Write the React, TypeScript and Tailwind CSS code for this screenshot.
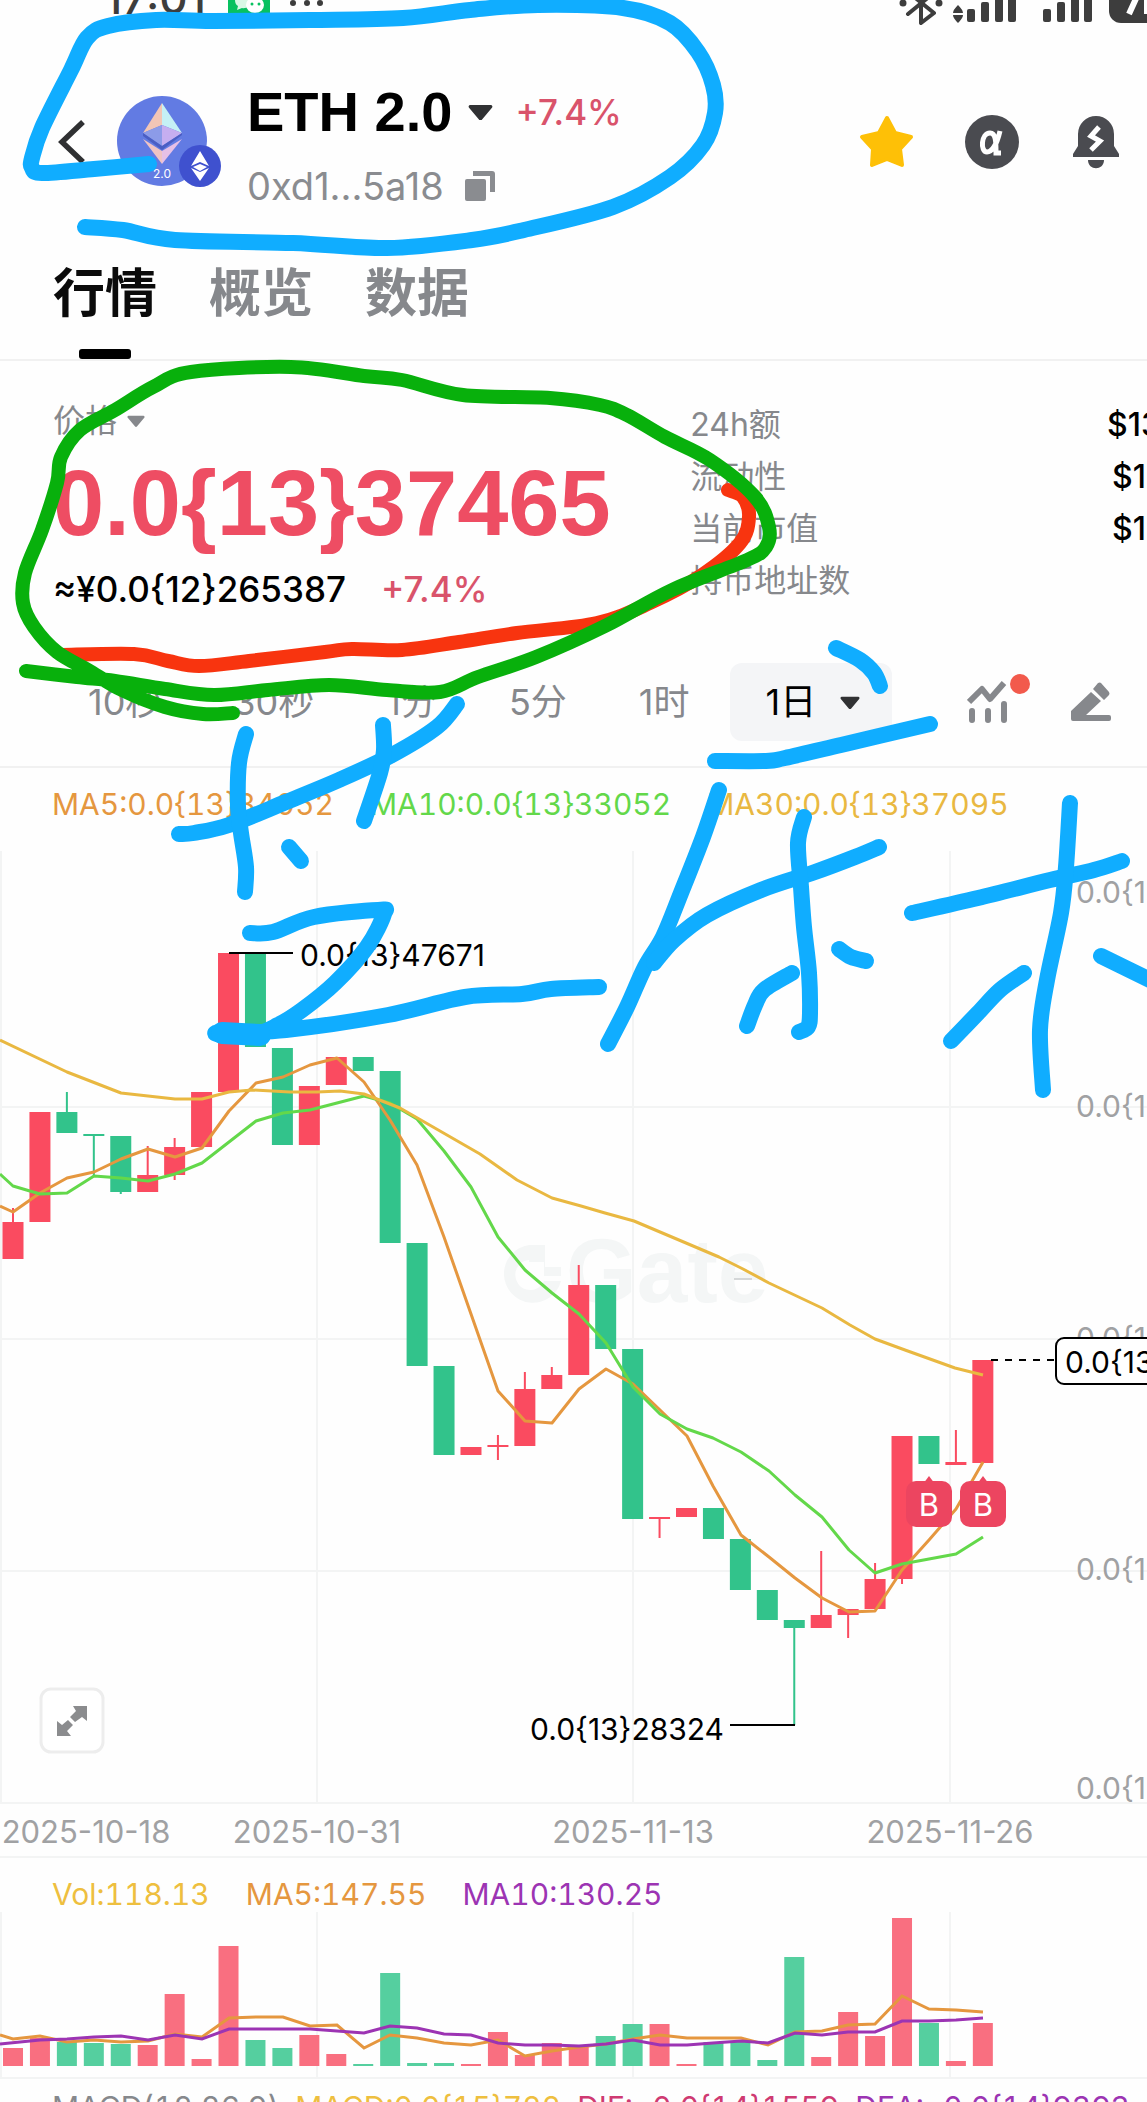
import { useState } from "react";

type Point = [number, number];
type Candle = {
  up: boolean;
  top: number;
  bottom: number;
  high?: number;
  low?: number;
  vol: number;
};

const RED = "#fa4b60";
const GREEN = "#32c38b";
const ORANGE = "#e5973f";
const LIME = "#63d84a";
const YELLOW = "#e9b841";
const PURPLE = "#9c34b3";

const STEP = 26.94;
const GRID_X = [1, 317, 633, 950];

const candles: Candle[] = [
  { up: true, top: 1222, bottom: 1259, high: 1208, vol: 2048 },
  { up: true, top: 1112, bottom: 1222, vol: 2038 },
  { up: false, top: 1112, bottom: 1133, high: 1092, vol: 2042 },
  { up: false, top: 1134, bottom: 1136, low: 1176, vol: 2043 },
  { up: false, top: 1136, bottom: 1192, low: 1194, vol: 2044 },
  { up: true, top: 1175, bottom: 1192, high: 1146, vol: 2045 },
  { up: true, top: 1147, bottom: 1175, high: 1138, low: 1180, vol: 1994 },
  { up: true, top: 1092, bottom: 1147, vol: 2059 },
  { up: true, top: 953, bottom: 1092, vol: 1946 },
  { up: false, top: 953, bottom: 1047, vol: 2040 },
  { up: false, top: 1048, bottom: 1145, vol: 2048 },
  { up: true, top: 1086, bottom: 1145, vol: 2035 },
  { up: true, top: 1057, bottom: 1085, vol: 2054 },
  { up: false, top: 1057, bottom: 1071, vol: 2064 },
  { up: false, top: 1071, bottom: 1243, vol: 1973 },
  { up: false, top: 1243, bottom: 1366, vol: 2063 },
  { up: false, top: 1366, bottom: 1455, vol: 2063 },
  { up: true, top: 1447, bottom: 1455, vol: 2064 },
  { up: true, top: 1445, bottom: 1447, high: 1435, low: 1460, vol: 2032 },
  { up: true, top: 1389, bottom: 1446, high: 1372, vol: 2055 },
  { up: true, top: 1375, bottom: 1389, high: 1367, vol: 2043 },
  { up: true, top: 1285, bottom: 1375, high: 1265, vol: 2046 },
  { up: false, top: 1285, bottom: 1349, vol: 2036 },
  { up: false, top: 1349, bottom: 1519, vol: 2024 },
  { up: true, top: 1517, bottom: 1519, low: 1538, vol: 2024 },
  { up: true, top: 1508, bottom: 1517, vol: 2064 },
  { up: false, top: 1508, bottom: 1539, vol: 2042 },
  { up: false, top: 1539, bottom: 1590, vol: 2042 },
  { up: false, top: 1590, bottom: 1620, vol: 2060 },
  { up: false, top: 1620, bottom: 1628, low: 1725, vol: 1957 },
  { up: true, top: 1615, bottom: 1628, high: 1551, vol: 2057 },
  { up: true, top: 1609, bottom: 1615, low: 1638, vol: 2012 },
  { up: true, top: 1579, bottom: 1609, high: 1563, vol: 2036 },
  { up: true, top: 1436, bottom: 1579, low: 1584, vol: 1918 },
  { up: false, top: 1436, bottom: 1464, vol: 2023 },
  { up: true, top: 1462, bottom: 1465, high: 1430, vol: 2061 },
  { up: true, top: 1360, bottom: 1463, vol: 2023 },
];

const ma5 =
  "0,1206 13,1212 40,1193 67,1178 94,1172 121,1159 148,1149 175,1157 202,1148 229,1111 256,1083 283,1077 310,1065 337,1058 364,1082 390,1120 417,1165 444,1237 471,1314 498,1391 525,1421 552,1423 579,1389 606,1369 633,1384 660,1410 687,1436 713,1486 741,1535 769,1557 795,1578 822,1598 849,1612 875,1611 902,1570 929,1540 956,1509 983,1462";
const ma10 =
  "0,1174 13,1186 40,1194 67,1193 94,1176 121,1178 148,1181 175,1174 202,1163 229,1142 256,1121 283,1113 310,1110 337,1103 364,1096 390,1103 417,1119 444,1151 471,1187 498,1237 525,1270 552,1293 579,1314 606,1343 633,1387 660,1414 687,1429 713,1438 741,1452 769,1471 795,1495 822,1517 849,1550 875,1573 902,1564 929,1559 956,1554 983,1537";
const ma30 =
  "0,1040 67,1072 121,1093 175,1099 202,1099 229,1092 252,1090 290,1092 317,1092 340,1091 364,1094 400,1108 440,1131 480,1154 517,1180 552,1198 581,1206 605,1213 634,1221 686,1243 719,1257 743,1269 769,1283 822,1308 850,1325 875,1339 905,1350 955,1368 983,1375";
const volMa5 =
  "0,2035 13,2039 40,2036 67,2042 94,2040 121,2042 148,2041 175,2034 202,2037 229,2018 256,2017 283,2017 310,2026 337,2025 364,2048 390,2035 417,2038 444,2043 471,2045 498,2040 525,2056 552,2051 579,2047 606,2044 633,2039 660,2035 687,2038 713,2038 741,2038 768,2045 795,2032 822,2031 848,2025 875,2024 902,1996 929,2009 956,2010 983,2012";
const volMa10 =
  "0,2044 40,2040 67,2039 94,2037 121,2036 148,2040 175,2035 202,2039 229,2029 310,2029 337,2031 364,2033 390,2026 417,2028 444,2034 471,2035 498,2043 525,2045 552,2045 579,2046 606,2044 633,2040 660,2045 687,2045 713,2043 741,2041 768,2043 795,2033 822,2035 848,2032 875,2032 902,2021 929,2021 956,2020 983,2018";

const priceAxis = [892, 1106, 1338, 1569, 1788];
const dateAxis = [
  { x: 86, label: "2025-10-18" },
  { x: 317, label: "2025-10-31" },
  { x: 633, label: "2025-11-13" },
  { x: 950, label: "2025-11-26" },
];

const redInk: Point[] = [
  [62, 655], [134, 654], [168, 661], [199, 666], [249, 661], [325, 652], [352, 649], [402, 650],
  [459, 642], [517, 633], [597, 623], [650, 603], [702, 575], [740, 543], [749, 517], [743, 497], [728, 490],
];
const greenInk: Point[] = [
  [26, 671], [77, 677], [115, 681], [165, 689], [214, 695], [268, 690], [329, 685], [387, 690],
  [440, 692], [478, 677], [536, 657], [605, 626], [672, 590], [747, 560], [766, 547], [769, 527],
  [755, 497], [710, 460], [665, 437], [627, 415], [600, 405], [550, 398], [463, 395], [402, 380],
  [364, 376], [291, 367], [191, 372], [153, 387], [115, 410], [80, 430], [61, 457], [57, 483],
  [42, 530], [25, 573], [23, 603], [34, 627], [57, 652], [88, 670], [122, 690], [165, 707],
  [203, 714], [233, 713],
];
const blueInk: Point[][] = [
  [
    [149, 164], [94, 169], [42, 173], [32, 168], [32, 158], [42, 128], [71, 70], [87, 38],
    [108, 26], [156, 20], [212, 21], [310, 20], [403, 18], [470, 10], [538, 5], [623, 8], [670, 23],
    [698, 52], [713, 85], [715, 113], [703, 145], [670, 177], [613, 207], [524, 230], [472, 240],
    [387, 248], [293, 243], [175, 240], [123, 230], [85, 227],
  ],
  [[179, 834], [194, 833], [229, 825], [286, 802], [339, 780], [392, 755], [437, 727], [457, 704]],
  [[383, 725], [384, 750], [380, 773], [364, 821]],
  [[246, 734], [239, 763], [238, 807], [241, 833], [246, 867], [245, 892]],
  [[289, 847], [301, 861]],
  [
    [250, 933], [273, 932], [314, 917], [378, 910], [384, 914], [367, 947], [335, 983],
    [302, 1010], [278, 1025], [250, 1036], [216, 1033], [286, 1030], [388, 1015], [465, 997],
    [522, 994], [551, 989], [599, 987],
  ],
  [[836, 648], [860, 660], [874, 673], [880, 686]],
  [[715, 761], [766, 761], [785, 758], [841, 745], [930, 724]],
  [[719, 790], [703, 837], [681, 893], [663, 937], [645, 967], [627, 1007], [608, 1044]],
  [[654, 963], [674, 940], [707, 915], [761, 890], [815, 872], [855, 857], [879, 847]],
  [[804, 817], [798, 843], [801, 887], [804, 927], [809, 973], [810, 1013], [808, 1027], [799, 1032]],
  [[792, 973], [764, 990], [755, 1005], [747, 1026]],
  [[839, 949], [851, 957], [866, 961]],
  [[912, 913], [978, 898], [1050, 880], [1094, 870], [1122, 861]],
  [[1070, 803], [1066, 867], [1061, 913], [1047, 980], [1040, 1030], [1043, 1090]],
  [[1024, 973], [1000, 990], [978, 1013], [951, 1041]],
  [[1101, 956], [1150, 980]],
];

// Catmull-Rom through every point, written as cubic segments
function smooth(points: Point[]) {
  let d = `M${points[0][0]} ${points[0][1]}`;
  for (let i = 0; i < points.length - 1; i++) {
    const p0 = points[i - 1] ?? points[i];
    const p1 = points[i];
    const p2 = points[i + 1];
    const p3 = points[i + 2] ?? p2;
    const c1 = [p1[0] + (p2[0] - p0[0]) / 6, p1[1] + (p2[1] - p0[1]) / 6];
    const c2 = [p2[0] - (p3[0] - p1[0]) / 6, p2[1] - (p3[1] - p1[1]) / 6];
    d += ` C${c1.join(" ")} ${c2.join(" ")} ${p2.join(" ")}`;
  }
  return d;
}

function Caret({ className }: { className: string }) {
  return (
    <svg viewBox="0 0 24 16" className={className} aria-hidden="true">
      <path d="M2 1h20a1.500 1.500 0 0 1 1 2.500L13.500 15a2 2 0 0 1-3 0L1 3.500A1.500 1.500 0 0 1 2 1z" fill="currentColor" />
    </svg>
  );
}

function StatusBar() {
  return (
    <div className="flex h-[26px] items-start justify-between overflow-hidden pl-[104px] text-[#3d3d3d]">
      <div className="flex items-start">
        <span className="-mt-[26px] w-[124px] text-[44px] leading-[48px] font-medium">17:01</span>
        <svg width="42" height="14" viewBox="0 0 42 14">
          <rect width="42" height="14" fill="#08c160" />
          <path d="M7 0h16c0 6-5 9-9 8l-5 2 1-4c-2-1-3-3-3-6z" fill="#d9f8e6" />
          <ellipse cx="27" cy="5" rx="9" ry="8" fill="#fff" />
          <circle cx="24" cy="4" r="1.500" fill="#08c160" />
          <circle cx="31" cy="4" r="1.500" fill="#08c160" />
        </svg>
        <svg width="60" height="12" viewBox="0 0 60 12" fill="currentColor">
          <circle cx="23" cy="3" r="3" />
          <circle cx="37" cy="3" r="3" />
          <circle cx="50" cy="3" r="3" />
        </svg>
      </div>
      <svg width="248" height="26" viewBox="0 0 248 26" fill="currentColor">
        <g fill="none" stroke="currentColor" strokeWidth="4" strokeLinecap="round" strokeLinejoin="round">
          <path d="M9 14 31-4M14-4l21 17-13 10V-4" />
        </g>
        <circle cx="4" cy="3" r="3.500" />
        <circle cx="40" cy="3" r="3.500" />
        <path d="M54 13q0-3 5-8 5 5 5 8zM54 15h10q0 3-5 8-5-5-5-8z" />
        <rect x="68" y="9" width="8" height="13" rx="2" />
        <rect x="82" y="2" width="8" height="20" rx="2" />
        <rect x="96" y="-6" width="8" height="28" rx="2" />
        <rect x="109" y="-6" width="8" height="28" rx="2" />
        <rect x="144" y="9" width="8" height="13" rx="2" />
        <rect x="158" y="2" width="8" height="20" rx="2" />
        <rect x="172" y="-6" width="8" height="28" rx="2" />
        <rect x="185" y="-6" width="8" height="28" rx="2" />
        <rect x="210" y="-30" width="80" height="53" rx="12" />
        <path d="M230 14 240-8M248-4v18" stroke="#fff" strokeWidth="6" />
      </svg>
    </div>
  );
}

function TokenLogo() {
  return (
    <svg width="104" height="92" viewBox="0 0 104 92" className="ml-[31px] shrink-0" role="img" aria-label="ETH 2.0">
      <circle cx="45" cy="45" r="45" fill="#627be3" />
      <path d="M45 7 26 37l19-8z" fill="#f2c6b6" />
      <path d="M45 7 65 37 45 29z" fill="#c5f0f5" />
      <path d="M45 29 26 37l19 13z" fill="#8c9be8" />
      <path d="M45 29 65 37 45 50z" fill="#c5aef0" />
      <path d="m26 43 19 12v13z" fill="#efc3c3" />
      <path d="M65 43 45 55v13z" fill="#e6c0e6" />
      <path d="m26 37 19 13 20-13v2L45 54 26 40z" fill="#4a5ec4" />
      <text x="45" y="82" textAnchor="middle" fontSize="12" fill="#fff">2.0</text>
      <circle cx="83" cy="70" r="21" fill="#3f51cf" />
      <path d="m83 55 9 15-9-4-9 4z" fill="#fff" />
      <path d="m83 85 9-13-9 4-9-4z" fill="#fff" />
      <path d="m76 71 7-3 7 3-7 4z" fill="#fff" />
    </svg>
  );
}

function Header() {
  return (
    <header className="flex items-center pt-[54px] pr-[24px] pl-[58px]">
      <button type="button" aria-label="返回" className="shrink-0">
        <svg width="28" height="44" viewBox="0 0 28 44" fill="none">
          <path d="M25 2 4 22l21 20" stroke="#2f3032" strokeWidth="5.500" />
        </svg>
      </button>
      <TokenLogo />
      <div className="ml-[26px] flex-1">
        <div className="flex h-16 items-center">
          <h1 className="font-['Liberation_Sans',sans-serif] text-[56px] leading-[64px] font-bold whitespace-nowrap text-black">
            ETH 2.0
          </h1>
          <Caret className="ml-[16px] w-[25px] text-[#303133]" />
          <span className="ml-[22px] text-[35px] leading-[40px] font-medium text-[#d9536b]">+7.4%</span>
        </div>
        <div className="mt-6 flex h-9 items-center text-[#8a8c90]">
          <span className="text-[38px] leading-[36px]">0xd1...5a18</span>
          <button type="button" aria-label="复制地址" className="ml-[20px]">
            <svg width="32" height="32" viewBox="0 0 32 32" fill="currentColor">
              <rect x="1" y="9" width="21" height="22" rx="2" />
              <path d="M9 1h19a3 3 0 0 1 3 3v18h-5V6H9z" />
            </svg>
          </button>
        </div>
      </div>
      <div className="flex items-center gap-[50px]">
        <button type="button" aria-label="收藏">
          <svg width="56" height="56" viewBox="0 0 56 56">
            <path
              d="M28 4 36 19 52 23 41 35 43 51 28 45 13 51 14 35 3 23 20 19z"
              fill="#fec007" stroke="#fec007" strokeWidth="4" strokeLinejoin="round"
            />
          </svg>
        </button>
        <button type="button" aria-label="Alpha">
          <svg width="54" height="54" viewBox="0 0 54 54">
            <circle cx="27" cy="27" r="27" fill="#4a4b50" />
            <path
              d="M35 16c-3 13-8 21-13 21-7 0-6-19 3-19 6 0 6 9 6 20h5"
              fill="none" stroke="#fff" strokeWidth="5"
            />
          </svg>
        </button>
        <button type="button" aria-label="价格提醒">
          <svg width="54" height="54" viewBox="0 0 54 54" fill="#4a4b50">
            <path d="M9 19a18 18 0 0 1 36 0v12l5 8v3H4v-3l5-8zM19 45h16c0 11-16 11-16 0z" />
            <path d="m30 12-8 9 9 5-9 9" fill="none" stroke="#fff" strokeWidth="5" />
          </svg>
        </button>
      </div>
    </header>
  );
}

function Tabs() {
  const [active, setActive] = useState("行情");
  return (
    <nav className="flex gap-[52px] border-b-2 border-[#f1f1f1] px-[53px] pt-[58px]">
      {["行情", "概览", "数据"].map((tab) => (
        <button key={tab} type="button" onClick={() => setActive(tab)} className="flex flex-col items-center">
          <span className={`text-[52px] leading-[64px] font-bold ${tab === active ? "text-[#0b0b0b]" : "text-[#86888c]"}`}>
            {tab}
          </span>
          <span className={`mt-[23px] h-[10px] w-[52px] rounded-[3px] ${tab === active ? "bg-black" : ""}`} />
        </button>
      ))}
    </nav>
  );
}

const stats = [
  { label: "24h额", value: "$13", width: "w-[40px]" },
  { label: "流动性", value: "$1", width: "w-[35px]" },
  { label: "当前市值", value: "$1", width: "w-[35px]" },
  { label: "持币地址数", value: "", width: "w-[35px]" },
];

function PriceSummary() {
  return (
    <section className="grid grid-cols-[60%_1fr]">
      <div className="pt-10 pl-[53px]">
        <button type="button" className="flex h-10 items-center gap-[10px] text-[32px] leading-[40px] text-[#86888c]">
          价格
          <Caret className="w-[18px]" />
        </button>
        <p className="mt-[22px] font-['Liberation_Sans',sans-serif] text-[92px] leading-[80px] font-bold whitespace-nowrap text-[#ee4d63]">
          0.0{"{13}"}37465
        </p>
        <p className="mt-[26px] flex h-10 items-center gap-[35px] text-[35px] leading-[40px] font-medium whitespace-nowrap text-black">
          ≈¥0.0{"{12}"}265387
          <span className="text-[#d9536b]">+7.4%</span>
        </p>
      </div>
      <dl className="overflow-hidden pt-[38px] pl-[2px]">
        {stats.map((row) => (
          <div key={row.label} className="flex h-[52px] items-center justify-between">
            <dt className="text-[32px] leading-[40px] text-[#86888c]">{row.label}</dt>
            <dd className={`${row.width} text-[32px] leading-[40px] font-medium whitespace-nowrap text-black`}>
              {row.value}
            </dd>
          </div>
        ))}
      </dl>
    </section>
  );
}

function IntervalBar() {
  return (
    <div className="flex items-center border-b-2 border-[#f1f1f1] pt-[54px] pr-9 pb-[25px] pl-[52px] text-[36px] leading-[40px] text-[#86888c]">
      {["10秒", "30秒", "1分", "5分", "1时"].map((label) => (
        <button key={label} type="button" className="px-9 whitespace-nowrap">
          {label}
        </button>
      ))}
      <div className="relative ml-1">
        <select
          aria-label="更多周期"
          defaultValue="1日"
          className="h-[78px] w-[162px] appearance-none rounded-[12px] bg-[#f4f5f7] pl-9 text-black"
        >
          <option>1日</option>
        </select>
        <Caret className="pointer-events-none absolute top-[33px] right-[32px] w-[20px] text-[#303133]" />
      </div>
      <div className="ml-auto flex items-center gap-16">
        <button type="button" aria-label="指标" className="relative">
          <svg width="40" height="44" viewBox="0 0 40 44" fill="none" stroke="currentColor">
            <path d="m2 22 13-13 8 10L37 3" strokeWidth="6" strokeLinejoin="round" />
            <path d="M5 31v9M21 31v9M37 24v16" strokeWidth="6" strokeLinecap="round" />
          </svg>
          <span className="absolute -top-[6px] -right-[23px] h-5 w-5 rounded-full bg-[#f25a4c]" />
        </button>
        <button type="button" aria-label="画线">
          <svg width="40" height="42" viewBox="0 0 40 42" fill="currentColor">
            <path d="M0 30 20 11l10 9-15 14h23q2 0 2 2v2q0 2-2 2H2q-2 0-2-2zM22 8l5-6q2-1 3 0l8 9q1 2 0 3l-5 5z" />
          </svg>
        </button>
      </div>
    </div>
  );
}

function BuyMark({ x, y }: { x: number; y: number }) {
  return (
    <g>
      <path d={`M${x - 6} ${y - 20}l6-8 6 8z`} fill="#ec4560" />
      <rect x={x - 23} y={y - 23} width="46" height="46" rx="10" fill="#ec4560" />
      <text x={x} y={y + 12} textAnchor="middle" fontSize="31" fill="#fff">B</text>
    </g>
  );
}

function CandleChart() {
  return (
    <svg viewBox="0 840 1147 1018" className="block w-full" fontSize="30">
      <g stroke="#f3f4f4" strokeWidth="2">
        {GRID_X.map((x) => <path key={x} d={`M${x} 851V1802`} />)}
        {[1107, 1339, 1571, 1803].map((y) => <path key={y} d={`M0 ${y}H1147`} />)}
        <path d="M0 1857H1147" />
      </g>

      <g fill="#f4f6f6">
        <path d="M529 1245a29 29 0 1 0 32 36h-17a15 15 0 1 1-15-21z" />
        <path d="M529 1262h15v14h17v-9h-16v-22h-16z" />
        <text x="566" y="1302" fontFamily="Liberation Sans" fontWeight="700" fontSize="91">Gate</text>
      </g>
      <path d="M734 1279h18" stroke="#b5b8ba" />

      {candles.map((c, i) => {
        const x = 13 + i * STEP;
        const color = c.up ? RED : GREEN;
        return (
          <g key={i} fill={color}>
            <rect x={x - 1} y={c.high ?? c.top} width="2" height={(c.low ?? c.bottom) - (c.high ?? c.top)} />
            <rect x={x - 10.5} y={c.top} width="21" height={c.bottom - c.top} />
          </g>
        );
      })}

      <g fill="none" strokeWidth="3" strokeLinejoin="round">
        <polyline points={ma5} stroke={ORANGE} />
        <polyline points={ma10} stroke={LIME} />
        <polyline points={ma30} stroke={YELLOW} />
      </g>

      <path d="M229 953H293M730 1725H795" stroke="#000" strokeWidth="2" />
      <text x="300" y="966">0.0{"{13}"}47671</text>
      <text x="724" y="1740" textAnchor="end">0.0{"{13}"}28324</text>

      <BuyMark x={929} y={1504} />
      <BuyMark x={983} y={1504} />

      <g fill="#a0a1a3">
        {priceAxis.map((y) => (
          <text key={y} x="1076" y={y + 11}>0.0{"{13}"}</text>
        ))}
        {dateAxis.map((d) => (
          <text key={d.label} x={d.x} y="1843" fontSize="31" textAnchor="middle">{d.label}</text>
        ))}
      </g>

      <path d="M991 1360H1055" stroke="#000" strokeWidth="2" strokeDasharray="7 7" />
      <rect x="1056" y="1338" width="160" height="46" rx="8" fill="#fff" stroke="#000" strokeWidth="2" />
      <text x="1065" y="1373">0.0{"{13}"}37465</text>

      <rect x="41" y="1689" width="62" height="63" rx="10" fill="#fff" stroke="#ededed" strokeWidth="3" />
      <path
        d="M73 1706h14v15l-5-4-7 5-5-5 6-6zM57 1721l5 4 6-5 5 5-6 6 4 5H57z"
        fill="#8b8c8e"
      />
    </svg>
  );
}

function VolumeChart() {
  return (
    <svg viewBox="0 1912 1147 167" className="block w-full">
      <g stroke="#f3f4f4" strokeWidth="2">
        {GRID_X.map((x) => <path key={x} d={`M${x} 1912V2078`} />)}
        <path d="M0 2078H1147" />
      </g>
      {candles.map((c, i) => (
        <rect
          key={i}
          x={13 + i * STEP - 10}
          y={c.vol}
          width="20"
          height={2066 - c.vol}
          fill={c.up ? "#f96f80" : "#55cf9f"}
        />
      ))}
      <g fill="none" strokeWidth="3">
        <polyline points={volMa5} stroke={ORANGE} />
        <polyline points={volMa10} stroke={PURPLE} />
      </g>
    </svg>
  );
}

function Ink() {
  return (
    <svg
      viewBox="0 0 1147 2102"
      className="pointer-events-none absolute inset-x-0 top-0 w-full"
      fill="none" strokeWidth="16" strokeLinecap="round" strokeLinejoin="round" aria-hidden="true"
    >
      <path d={smooth(redInk)} stroke="#f8340f" strokeWidth="14" />
      <path d={smooth(greenInk)} stroke="#08b00c" strokeWidth="14" />
      <g stroke="#10adff">
        {blueInk.map((line, i) => <path key={i} d={smooth(line)} />)}
        <path d="M222 1033 260 1035" strokeWidth="22" />
      </g>
    </svg>
  );
}

export default function App() {
  return (
    <main className="relative h-screen overflow-hidden bg-[#fefefe] font-['Inter','Noto_Sans_CJK_SC',sans-serif]">
      <StatusBar />
      <Header />
      <Tabs />
      <PriceSummary />
      <IntervalBar />
      <section>
        <div className="flex h-[72px] items-center gap-9 pl-[52px] text-[30px] leading-[36px] whitespace-nowrap tabular-nums">
          <span className="text-[#e5973f]">MA5:0.0{"{13}"}34052</span>
          <span className="text-[#63d84a]">MA10:0.0{"{13}"}33052</span>
          <span className="text-[#e9b841]">MA30:0.0{"{13}"}37095</span>
        </div>
        <CandleChart />
      </section>
      <section>
        <div className="flex gap-9 pt-[18px] pl-[52px] text-[30px] leading-[36px] whitespace-nowrap tabular-nums">
          <span className="text-[#eebf3f]">Vol:118.13</span>
          <span className="text-[#e5973f]">MA5:147.55</span>
          <span className="text-[#9c34b3]">MA10:130.25</span>
        </div>
        <VolumeChart />
      </section>
      <section className="flex gap-4 pt-[10px] pl-[52px] text-[30px] leading-[36px] whitespace-nowrap tabular-nums">
        <span className="text-[#86888c]">MACD(12,26,9)</span>
        <span className="text-[#eebf3f]">MACD:0.0{"{15}"}722</span>
        <span className="text-[#cf3a72]">DIF:-0.0{"{14}"}1559</span>
        <span className="text-[#9c34b3]">DEA:-0.0{"{14}"}9393</span>
      </section>
      <Ink />
    </main>
  );
}
